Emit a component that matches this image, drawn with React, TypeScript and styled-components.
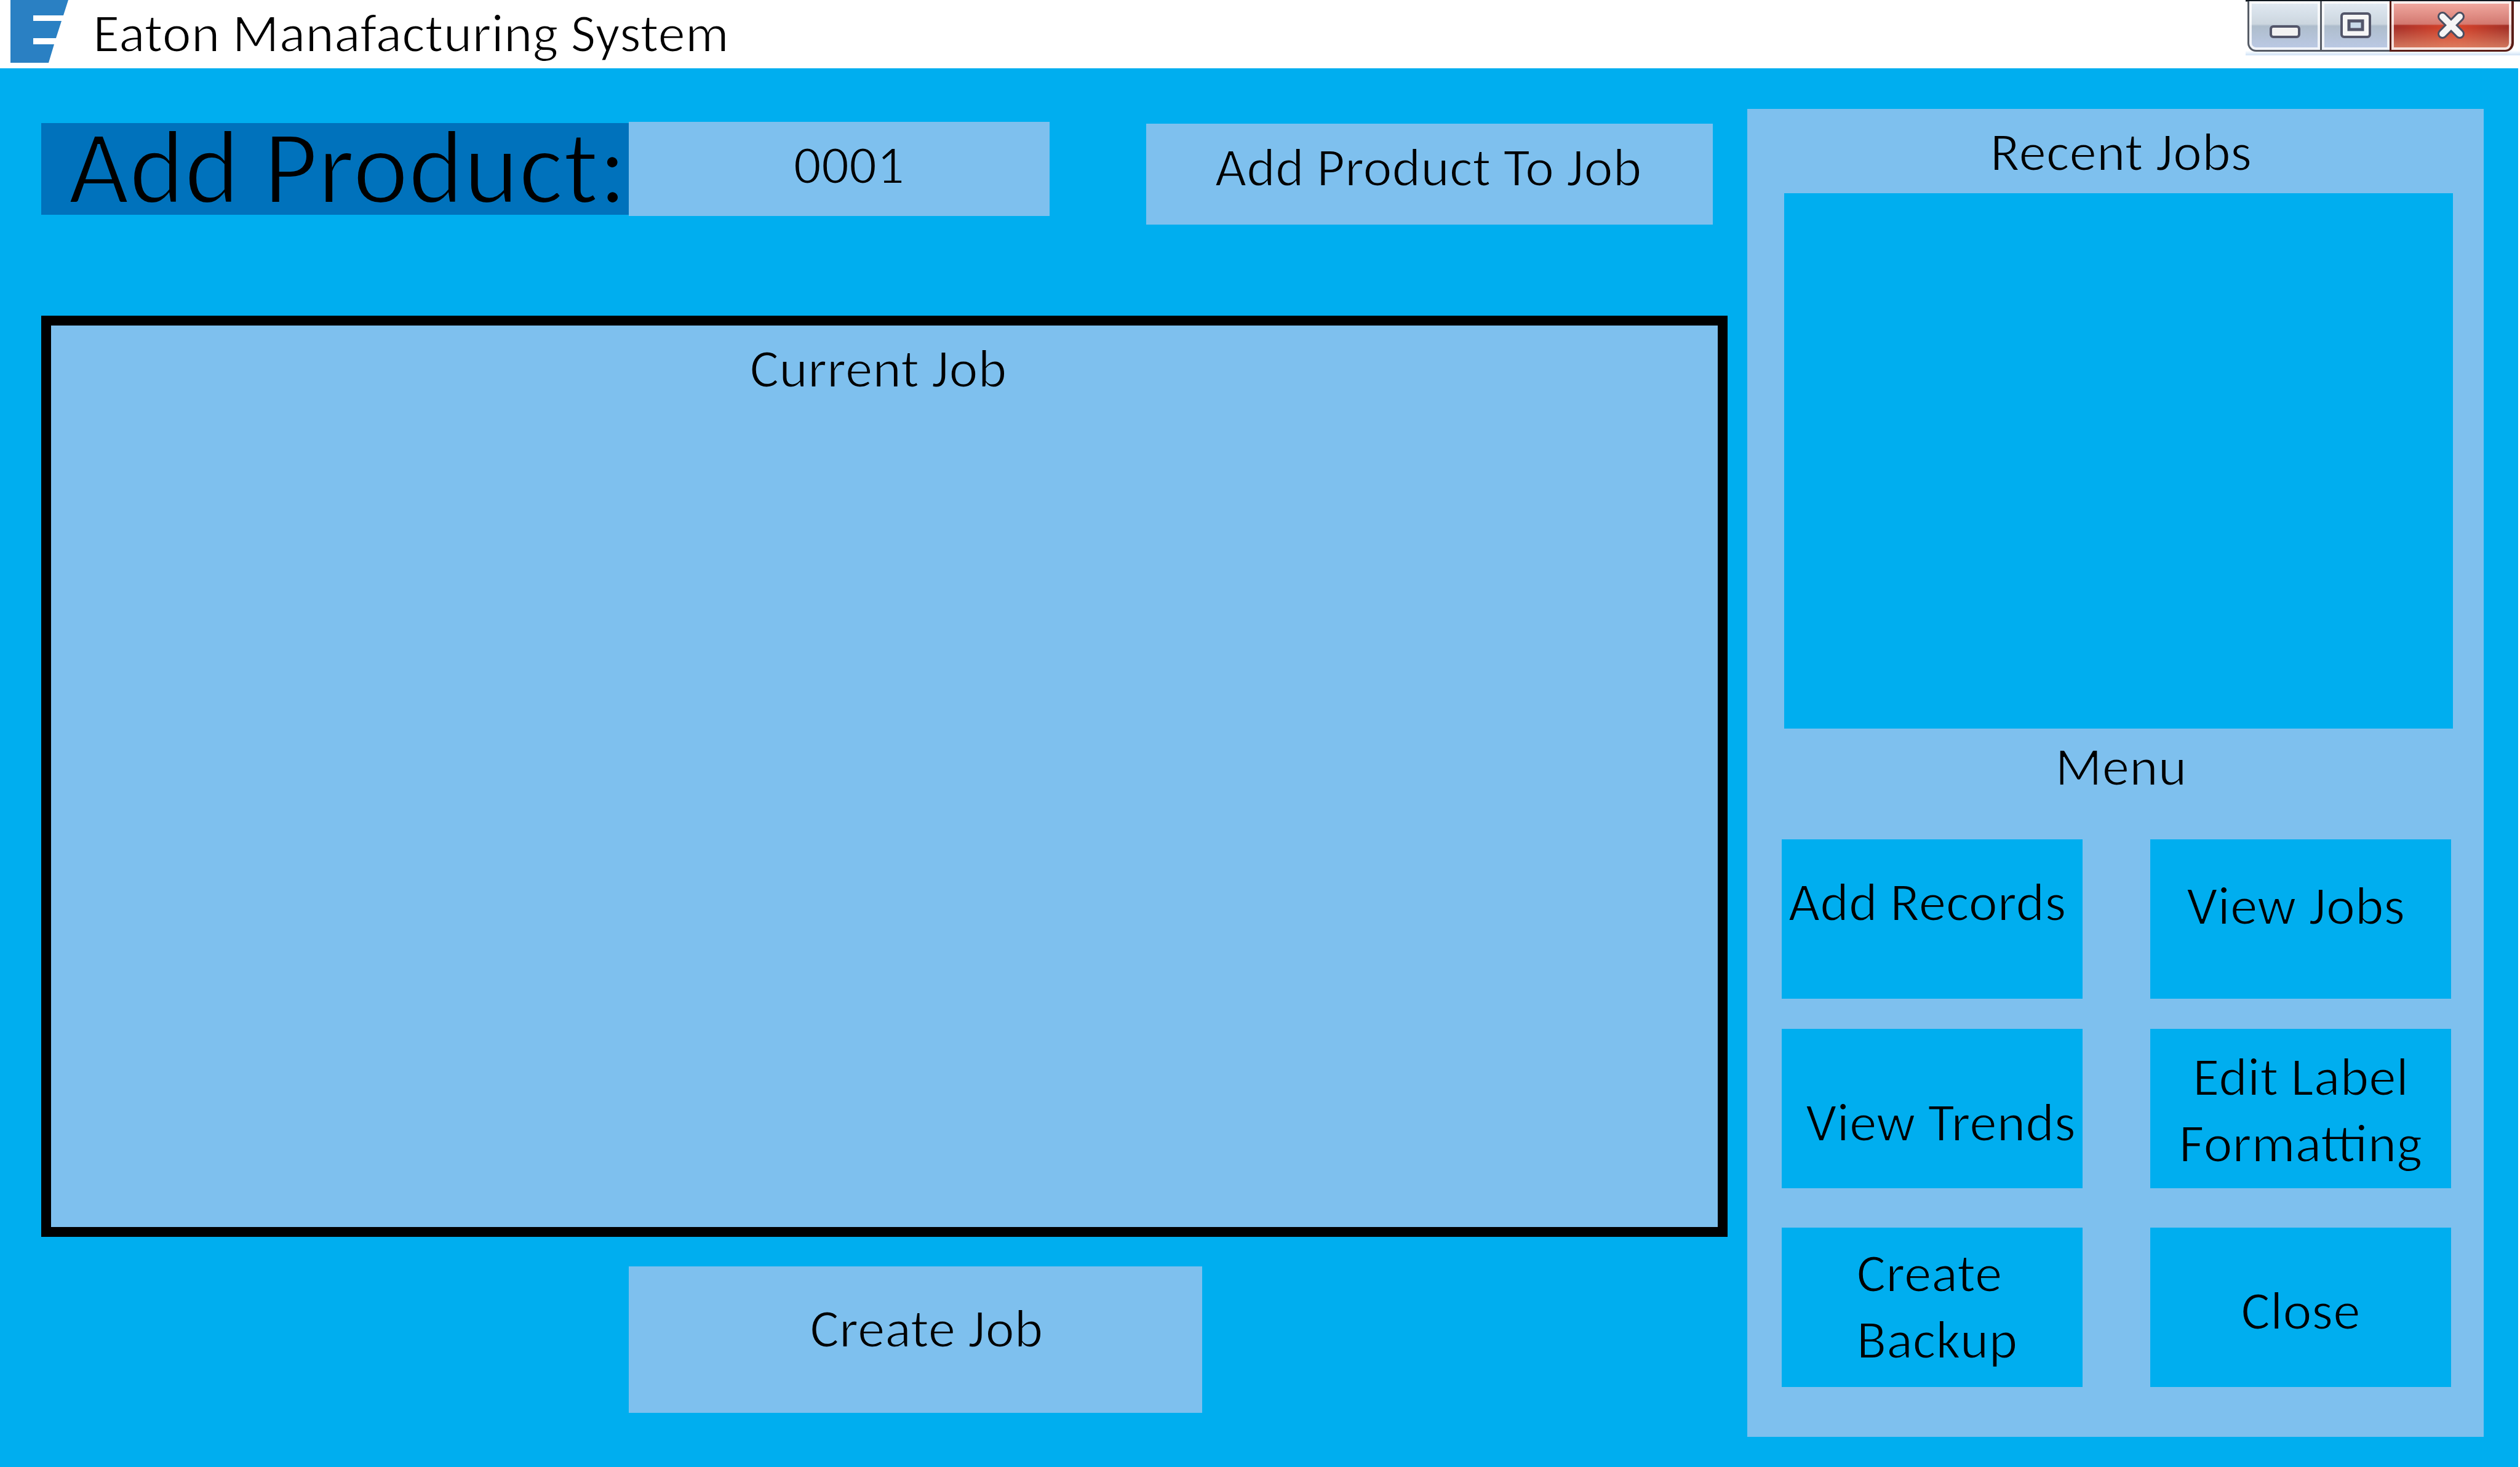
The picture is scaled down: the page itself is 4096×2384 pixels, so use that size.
import React, { useState } from "react";
import styled, { createGlobalStyle } from "styled-components";

const sky = "#00aeef";
const pale = "#7ec0ee";
const deep = "#0072bc";

const GlobalStyle = createGlobalStyle`
  *, *::before, *::after { box-sizing: border-box; }
  body {
    margin: 0;
    background: #fff;
    color: #000;
    font-family: Carlito, Calibri, "Open Sans", sans-serif;
    font-size: 89px;
    line-height: 108px;
  }
  button, input {
    margin: 0;
    border: 0;
    border-radius: 0;
    color: inherit;
    font: inherit;
  }
  button { cursor: pointer; }
  h1, h2 { margin: 0; font: inherit; }
`;

/* Thins the regular face to a light weight by trimming its edges with the surface colour. */
const Surface = styled.div<{ $tone: string }>`
  background: ${(p) => p.$tone};
  -webkit-text-stroke: 2px ${(p) => p.$tone};
`;

const Window = styled.div`
  min-height: 100vh;
  display: flex;
  flex-direction: column;
`;

const TitleBar = styled(Surface).attrs({ as: "header", $tone: "#ffffff" })`
  height: 111px;
  display: flex;
  align-items: flex-start;
  padding-left: 17px;
`;

const Logo = styled.svg`
  display: block;
  width: 94px;
  height: 102px;
  margin-right: 40px;
`;

const WindowControls = styled.div`
  width: 446px;
  height: 90px;
  margin-left: auto;
  display: grid;
  grid-template-columns: 118fr 113fr 202fr;
  padding: 2px 10px 6px 3px;
  background: linear-gradient(#101820 0 2px, #fff 3px 82px, #f4faff 84px, #d0e2f5);
`;

const ControlButton = styled.button<{ $kind: "min" | "max" | "close" }>`
  display: grid;
  place-items: center;
  padding: 0;
  border: 3px solid ${(p) => (p.$kind === "close" ? "#5a1d16" : "#565c66")};
  border-top-width: 0;
  border-right-width: ${(p) => (p.$kind === "close" ? "4px" : "0")};
  border-radius: ${(p) => (p.$kind === "min" ? "0 0 0 14px" : p.$kind === "close" ? "0 0 14px 0" : "0")};
  box-shadow: inset 0 0 0 4px rgba(255, 255, 255, 0.8);
  background: ${(p) =>
    p.$kind === "close"
      ? "linear-gradient(rgba(246,178,170,.95), rgba(214,128,120,.9) 47%, transparent 50%), linear-gradient(transparent 55%, rgba(222,140,110,.85)), linear-gradient(90deg, #a5302a, #d5442c 45%, #d5442c 58%, #a03028)"
      : "linear-gradient(#e2ebf4, #ccd6df 47%, #aebdcc 51%, #bccae6)"};
`;

const ControlIcon = styled.svg`
  display: block;
  width: 56px;
  height: 56px;
`;

const Body = styled(Surface).attrs({ as: "main", $tone: sky })`
  flex: 1;
  display: grid;
  grid-template-columns: minmax(0, 2741fr) minmax(0, 1197fr);
  gap: 32px;
  padding: 66px 56px 49px 67px;
  border-right: 3px solid #fff;
`;

const Workspace = styled.section`
  display: flex;
  flex-direction: column;
  padding: 21px 0 39px;
`;

const ProductRow = styled.form`
  display: grid;
  grid-template-columns: minmax(0, 955fr) minmax(0, 684fr) minmax(0, 1078fr);
  align-items: start;
  padding-right: 24px;
  margin-bottom: 148px;
`;

const ProductLabel = styled(Surface).attrs({ as: "label", $tone: deep })<{ htmlFor: string }>`
  height: 149px;
  margin-top: 2px;
  padding-left: 44px;
  font-size: 171px;
  line-height: 144px;
  white-space: nowrap;
  -webkit-text-stroke-width: 4px;
`;

const ProductInput = styled(Surface).attrs({ as: "input", $tone: pale })<{ id: string; defaultValue: string }>`
  width: 100%;
  height: 153px;
  padding: 0 0 14px 32px;
  text-align: center;
`;

const AddButton = styled(Surface).attrs({ as: "button", $tone: pale })`
  height: 164px;
  margin: 3px 0 0 157px;
  padding: 0 4px 22px 0;
`;

const CurrentJob = styled(Surface).attrs({ as: "section", $tone: pale })`
  flex: 1;
  min-height: 600px;
  padding: 16px 20px 0 0;
  border: 16px solid #000;
  text-align: center;
`;

const CreateButton = styled(Surface).attrs({ as: "button", $tone: pale })`
  width: 34%;
  height: 238px;
  margin: 48px 0 0 955px;
  padding: 0 0 36px 36px;
`;

const SidePanel = styled(Surface).attrs({ as: "aside", $tone: pale })`
  display: flex;
  flex-direction: column;
  padding: 16px 50px 81px 60px;
`;

const PanelTitle = styled.h2<{ $after: number }>`
  margin-bottom: ${(p) => p.$after}px;
  padding-left: 8px;
  text-align: center;
`;

const RecentList = styled.div`
  flex: 1;
  min-height: 300px;
  margin-bottom: 8px;
  background: ${sky};
`;

const MenuGrid = styled.nav`
  display: grid;
  grid-template-columns: 1fr 1fr;
  gap: 49px 110px;
  margin: 0 3px 0 -4px;
`;

const MenuButton = styled(Surface).attrs({ as: "button", $tone: sky })<{ $top: number; $left: number; $right: number }>`
  height: 259px;
  display: flex;
  justify-content: center;
  align-items: flex-start;
  padding: ${(p) => p.$top}px ${(p) => p.$right}px 0 ${(p) => p.$left}px;
  white-space: pre;

  &:nth-child(n + 5) {
    margin-top: 15px;
  }
`;

const MenuText = styled.span<{ $align?: string }>`
  text-align: ${(p) => p.$align ?? "center"};
`;

const menu = [
  { text: "Add Records", top: 48, left: 0, right: 16 },
  { text: "View Jobs", top: 54, left: 0, right: 16 },
  { text: "View Trends", top: 98, left: 28, right: 0 },
  { text: "Edit Label\nFormatting", top: 24, left: 0, right: 0 },
  { text: "Create\nBackup", top: 20, left: 16, right: 0, align: "left" },
  { text: "Close", top: 81, left: 0, right: 0 },
];

export default function App() {
  const [jobs] = useState<string[]>([]);
  return (
    <Window>
      <GlobalStyle />
      <TitleBar>
        <Logo viewBox="0 0 94 102" aria-hidden="true">
          <path d="M0 0H94L86 25H37V34H83L74 62H37V72H71L62 102H0Z" fill="#2a80c3" />
        </Logo>
        <h1>Eaton Manafacturing System</h1>
        <WindowControls>
          <ControlButton $kind="min" aria-label="Minimize">
            <ControlIcon viewBox="0 0 56 56">
              <rect x="5" y="29" width="46" height="17" rx="4" fill="#f2f2f2" stroke="#53566a" strokeWidth="4" />
            </ControlIcon>
          </ControlButton>
          <ControlButton $kind="max" aria-label="Maximize">
            <ControlIcon viewBox="0 0 56 56">
              <rect x="5" y="8" width="46" height="38" rx="4" fill="#f6f6f6" stroke="#53566a" strokeWidth="4" />
              <rect x="17" y="20" width="22" height="14" fill="#c9dbea" stroke="#53566a" strokeWidth="5" />
            </ControlIcon>
          </ControlButton>
          <ControlButton $kind="close" aria-label="Close window">
            <ControlIcon viewBox="0 0 56 56">
              <path d="M13 13L41 41M41 13L13 41" stroke="#4a4f62" strokeWidth="16" strokeLinecap="round" />
              <path d="M13 13L41 41M41 13L13 41" stroke="#f5f5f5" strokeWidth="10" strokeLinecap="round" />
            </ControlIcon>
          </ControlButton>
        </WindowControls>
      </TitleBar>
      <Body>
        <Workspace>
          <ProductRow onSubmit={(e) => e.preventDefault()}>
            <ProductLabel htmlFor="product">Add Product:</ProductLabel>
            <ProductInput id="product" defaultValue="0001" />
            <AddButton>Add Product To Job</AddButton>
          </ProductRow>
          <CurrentJob>
            <h2>Current Job</h2>
          </CurrentJob>
          <CreateButton>Create Job</CreateButton>
        </Workspace>
        <SidePanel>
          <PanelTitle $after={13}>Recent Jobs</PanelTitle>
          <RecentList>
            {jobs.map((job) => (
              <div key={job}>{job}</div>
            ))}
          </RecentList>
          <PanelTitle $after={64}>Menu</PanelTitle>
          <MenuGrid>
            {menu.map((m) => (
              <MenuButton key={m.text} $top={m.top} $left={m.left} $right={m.right}>
                <MenuText $align={m.align}>{m.text}</MenuText>
              </MenuButton>
            ))}
          </MenuGrid>
        </SidePanel>
      </Body>
    </Window>
  );
}
